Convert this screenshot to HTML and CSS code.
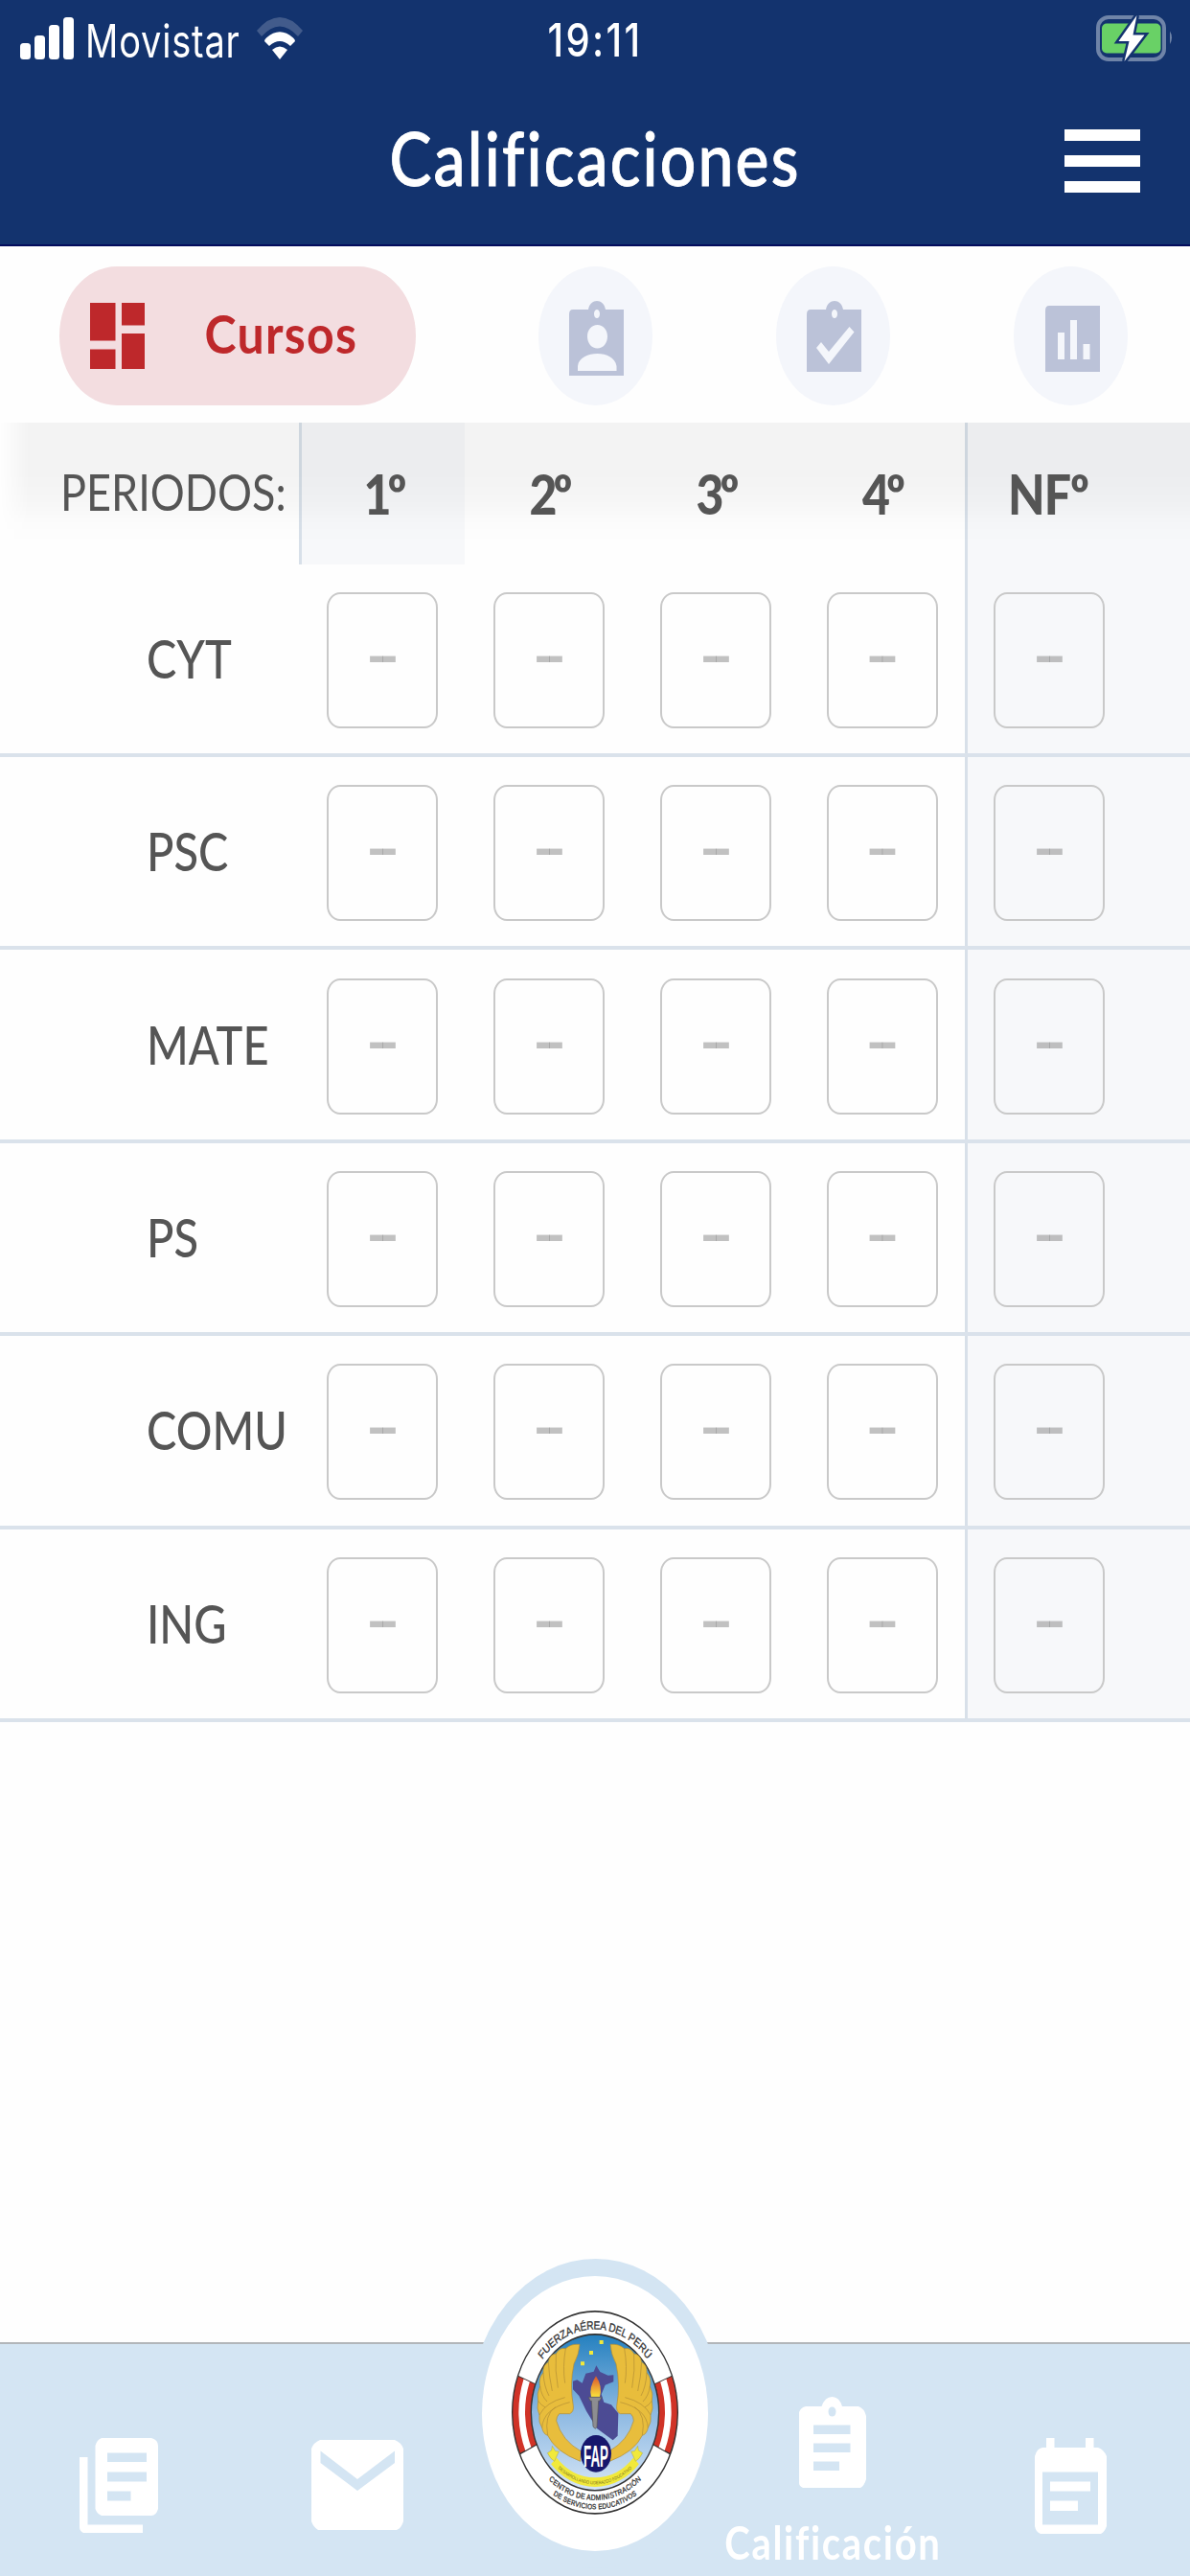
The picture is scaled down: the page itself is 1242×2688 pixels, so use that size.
FILE: index.html
```html
<!DOCTYPE html>
<html lang="es">
<head>
    <meta charset="UTF-8">
    <title>Calificaciones</title>
    <link rel="stylesheet" href="styles.css">
</head>
<body>
    <header class="header">
        <div class="status">
            <div class="status-left">
                <svg class="signal" width="56" height="44" viewBox="0 0 56 44">
                    <rect x="0" y="27" width="11" height="17" rx="3.5"/>
                    <rect x="15" y="19" width="11" height="25" rx="3.5"/>
                    <rect x="30" y="8" width="11" height="36" rx="3.5"/>
                    <rect x="45" y="0" width="11" height="44" rx="3.5"/>
                </svg>
                <span class="carrier">Movistar</span>
                <svg class="wifi" width="50" height="45" viewBox="0 0 50 45">
                    <path class="wifi-off" d="M1 14Q25-14 49 14L44 20Q25-1 6 20Z"/>
                    <path d="M9 25Q9 23 11 21.500Q25 9 39 21.500Q41 23 41 25L36 30Q25 20 14 30Z"/>
                    <path d="M17 34Q25 27 33 34L25 44Z"/>
                </svg>
            </div>
            <span class="clock">19:11</span>
            <svg class="battery" width="80" height="50" viewBox="0 0 80 50">
                <rect class="battery-case" x="2" y="3" width="69" height="44" rx="11"/>
                <rect class="battery-fill" x="6" y="9.500" width="61.500" height="31" rx="5"/>
                <path class="battery-nub" d="M77 17.500Q81 24 77 31Z"/>
                <path class="battery-bolt" d="M42.500 1L23.500 28H34.500L29.500 49L50.500 21.500H38.500Z"/>
            </svg>
        </div>
        <div class="title-bar">
            <h1>Calificaciones</h1>
            <div class="menu"><i></i><i></i><i></i></div>
        </div>
    </header>

    <nav class="tabs">
        <div class="tab tab-wide">
            <div class="pill">
                <svg width="57" height="69" viewBox="0 0 57 69">
                    <path d="M0 0h26.500v39.500H0zM0 48.500h26.500V69H0zM33 0h24v23.500H33zM33 32h24v37H33z"/>
                </svg>
                <span>Cursos</span>
            </div>
        </div>
        <div class="tab">
            <div class="round">
                <svg width="57" height="78" viewBox="0 0 57 78">
                    <path fill-rule="evenodd" d="M4 9H20C21 3 25 0 29 0S37 3 38 9H57V78H0V14Q0 9 4 9ZM29 9C27.500 9 26 10.500 26 13.500S27.500 18 29 18S32 16.500 32 13.500S30.500 9 29 9ZM29.500 25C23.500 25 19 30 19 37S23.500 49.500 29.500 49.500S40 44 40 37S35.500 25 29.500 25ZM9 73H49.500V68C48 59 39 55 29.500 55S10 59 9 68Z"/>
                </svg>
            </div>
        </div>
        <div class="tab">
            <div class="round">
                <svg width="57" height="78" viewBox="0 0 57 78">
                    <path fill-rule="evenodd" d="M4 9H20C21 3 25 0 29 0S37 3 38 9H57V74H0V14Q0 9 4 9ZM29 9C27.500 9 26 10.500 26 13.500S27.500 18 29 18S32 16.500 32 13.500S30.500 9 29 9ZM10 49L15 43L23 53L44.500 27L49.500 32.500L23 66Z"/>
                </svg>
            </div>
        </div>
        <div class="tab">
            <div class="round">
                <svg width="57" height="78" viewBox="0 0 57 78">
                    <path fill-rule="evenodd" d="M4 5H57V74H0V10Q0 5 4 5ZM13 33V61H20V33ZM26 20V61H33V20ZM39.500 45V61H46.500V45Z"/>
                </svg>
            </div>
        </div>
    </nav>

    <main class="grades">
        <div class="row periods">
            <div class="periods-label"><span>PERIODOS:</span></div>
            <div class="period active"><span>1º</span></div>
            <div class="period"><span>2º</span></div>
            <div class="period"><span>3º</span></div>
            <div class="period"><span>4º</span></div>
            <div class="period final"><span>NFº</span></div>
        </div>
        <div class="row">
            <div class="course"><span>CYT</span></div>
            <div class="cell"><b>--</b></div>
            <div class="cell"><b>--</b></div>
            <div class="cell"><b>--</b></div>
            <div class="cell"><b>--</b></div>
            <div class="cell final"><b>--</b></div>
        </div>
        <div class="row">
            <div class="course"><span>PSC</span></div>
            <div class="cell"><b>--</b></div>
            <div class="cell"><b>--</b></div>
            <div class="cell"><b>--</b></div>
            <div class="cell"><b>--</b></div>
            <div class="cell final"><b>--</b></div>
        </div>
        <div class="row">
            <div class="course"><span>MATE</span></div>
            <div class="cell"><b>--</b></div>
            <div class="cell"><b>--</b></div>
            <div class="cell"><b>--</b></div>
            <div class="cell"><b>--</b></div>
            <div class="cell final"><b>--</b></div>
        </div>
        <div class="row">
            <div class="course"><span>PS</span></div>
            <div class="cell"><b>--</b></div>
            <div class="cell"><b>--</b></div>
            <div class="cell"><b>--</b></div>
            <div class="cell"><b>--</b></div>
            <div class="cell final"><b>--</b></div>
        </div>
        <div class="row">
            <div class="course"><span>COMU</span></div>
            <div class="cell"><b>--</b></div>
            <div class="cell"><b>--</b></div>
            <div class="cell"><b>--</b></div>
            <div class="cell"><b>--</b></div>
            <div class="cell final"><b>--</b></div>
        </div>
        <div class="row">
            <div class="course"><span>ING</span></div>
            <div class="cell"><b>--</b></div>
            <div class="cell"><b>--</b></div>
            <div class="cell"><b>--</b></div>
            <div class="cell"><b>--</b></div>
            <div class="cell final"><b>--</b></div>
        </div>
    </main>

    <nav class="bottom">
        <div class="item">
            <svg width="82" height="99" viewBox="0 0 82 99">
                <path fill-rule="evenodd" d="M23 0H75Q82 2 82 8V74Q80 81 75 81H23Q18 79 16.500 74V8Q18 2 23 0ZM29 15.500V25H70V15.500ZM29 35.500V45.500H70V35.500ZM29 55.500V65.500H53.500V55.500Z"/>
                <path d="M0 20H8.500V90.500H66V99H4Q0 97 0 93Z"/>
            </svg>
        </div>
        <div class="item item-mail">
            <svg width="96" height="94" viewBox="0 0 96 94">
                <path fill-rule="evenodd" d="M9 0H87Q94 3 96 9V85Q94 92 89 94H7Q2 91 0 85V9Q2 3 9 0ZM9.500 11.500V24L48 53L87 24V11.500L48 41Z"/>
            </svg>
        </div>
        <div class="item item-logo">
            <div class="logo">
                <svg width="236" height="287" viewBox="70 105 708 861">
                    <defs>
                        <linearGradient id="sky" x1="0" y1="0" x2="0" y2="1">
                            <stop offset="0" stop-color="#2480bf"/>
                            <stop offset=".5" stop-color="#8db9e2"/>
                            <stop offset="1" stop-color="#d5e5f6"/>
                        </linearGradient>
                        <linearGradient id="fire" x1="0" y1="0" x2="0" y2="1">
                            <stop offset="0" stop-color="#d9532c"/>
                            <stop offset="1" stop-color="#fbe43c"/>
                        </linearGradient>
                        <path id="arcTop" d="M-213 0A213 213 0 0 1 213 0"/>
                        <path id="arcRibbon" d="M-184 0A184 184 0 0 0 184 0"/>
                        <path id="arcCentro" d="M-225 0A225 225 0 0 0 225 0"/>
                        <path id="arcServicios" d="M-248 0A248 248 0 0 0 248 0"/>
                        <g id="wing">
                            <path fill="#e8bd3c" stroke="#b08c35" stroke-width="2" d="M376 319Q350 316 332 332Q312 328 302 348Q282 350 278 374Q260 384 262 408Q246 424 252 450Q240 474 246 496Q240 520 250 540Q246 562 258 580Q262 600 276 604Q300 655 378 685L381 654Q320 620 303 558Q303 545 312 536L345 536Q358 530 356 512Q344 445 358 380Q374 350 376 319Z"/>
                            <path fill="none" stroke="#b08c35" stroke-width="2" d="M332 332Q322 390 330 440M302 348Q298 400 308 455M278 374Q280 420 290 465M262 408Q264 450 280 480M252 450Q256 480 274 498M246 496Q256 510 268 516M250 540Q270 500 330 485M258 580Q262 520 345 500M276 604Q264 540 300 515"/>
                        </g>
                    </defs>
                    <g transform="translate(424 532) scale(1 1.222)">
                        <circle r="259" fill="#fff" stroke="#333" stroke-width="4"/>
                        <g fill="none">
                            <path stroke="#333" stroke-width="60" d="M-208 96A229 229 0 0 1 -213 -84M208 96A229 229 0 0 0 213 -84"/>
                            <path stroke="#d03327" stroke-width="56" d="M-209 93A229 229 0 0 1 -214 -82M209 93A229 229 0 0 0 214 -82"/>
                            <path stroke="#fff" stroke-width="20" d="M-209 93A229 229 0 0 1 -214 -82M209 93A229 229 0 0 0 214 -82"/>
                        </g>
                        <circle r="200" fill="url(#sky)" stroke="#333" stroke-width="4"/>
                        <path fill="none" stroke="#f1e93b" stroke-width="24" d="M-129 124A179 179 0 0 0 129 124"/>
                        <path fill="#f1e93b" stroke="#9b9430" d="M-149 104L-136 97L-134 86L-124 99L-113 100L-127 125L-138 118ZM149 104L136 97L134 86L124 99L113 100L127 125L138 118Z"/>
                        <g class="seal-text">
                            <text font-size="30" textLength="376"><textPath href="#arcTop" startOffset="50%">FUERZA AÉREA DEL PERÚ</textPath></text>
                            <text font-size="20" textLength="314"><textPath href="#arcCentro" startOffset="50%">CENTRO DE ADMINISTRACIÓN</textPath></text>
                            <text font-size="19" textLength="276"><textPath href="#arcServicios" startOffset="50%">DE SERVICIOS EDUCATIVOS</textPath></text>
                            <text class="motto" font-size="12" textLength="250"><textPath href="#arcRibbon" startOffset="50%">DESARROLLANDO LIDERAZGO EDUCATIVO</textPath></text>
                        </g>
                    </g>
                    <path fill="#4c4b94" d="M428 385L440 405L465 416L482 415L482 436L456 446L444 475L452 500L475 508L497 535L495 605L480 619L430 582L397 528L374 480L355 460L355 434L368 430L384 440L395 410L420 404Z"/>
                    <use href="#wing"/>
                    <use href="#wing" transform="translate(848 0) scale(-1 1)"/>
                    <path fill="url(#fire)" d="M427 418Q448 450 439 484H412Q404 455 427 418Z"/>
                    <path fill="#8d8d91" stroke="#555" stroke-width="2" d="M404 484H445L439 496H435L430 578L424 583L418 576L413 496H409Z"/>
                    <path fill="#f1e93b" d="M379 373h12v12h-12zM406 339h12v12h-12zM438 306h12v12h-12z"/>
                    <ellipse cx="427" cy="661" rx="48" ry="58" fill="#17176d"/>
                    <text class="fap" transform="translate(427 702) scale(1 2)" font-size="48" textLength="78" lengthAdjust="spacingAndGlyphs">FAP</text>
                </svg>
            </div>
        </div>
        <div class="item item-active">
            <svg width="70" height="95" viewBox="0 0 70 95">
                <path fill-rule="evenodd" d="M7 10H23.500Q27 0 34.500 0T45 10H62Q68 12 70 20V86Q68 93 64 95H4Q0 93 0 90V16Q2 11 7 10ZM34.500 10.500C32 10.500 30.500 12.500 30.500 15.500S32 20.500 34.500 20.500S38.500 18.500 38.500 15.500S37 10.500 34.500 10.500ZM15 29.500V39H53.500V29.500ZM15 48.500V58H53.500V48.500ZM15 67.500V77H42V67.500Z"/>
            </svg>
            <span>Calificación</span>
        </div>
        <div class="item">
            <svg width="75" height="100" viewBox="0 0 75 100">
                <path fill-rule="evenodd" d="M12 0H20.500V10H53V0H61.500V10H66Q72 12 75 19V92Q73 98 69 100H6Q1 98 0 92V19Q2 11 8 10H12ZM8 35.500V90.500H66V35.500ZM16 45.500H58V55.500H16ZM16 65.500H45V76H16Z"/>
            </svg>
        </div>
    </nav>
</body>
</html>
```
FILE: styles.css
```css
body {
    margin: 0;
    width: 1242px;
    height: 2688px;
    overflow: hidden;
    display: flex;
    flex-direction: column;
    background-color: #fefefe;
    color: #555;
    font-family: Lato, sans-serif;
    font-variant-ligatures: none;
}
span, h1, b {
    display: inline-block;
    white-space: nowrap;
    line-height: 1;
}
svg {
    display: block;
    fill: currentColor;
    flex: none;
}

/* header */
.header {
    height: 257px;
    box-sizing: border-box;
    background-color: #13336e;
    border-bottom: 2px solid #030c5c;
    color: #fff;
}
.status {
    display: grid;
    grid-template-columns: 1fr auto 1fr;
    align-items: center;
    height: 80px;
    font-family: Inter, sans-serif;
}
.status-left {
    display: flex;
    align-items: center;
    padding-left: 21px;
}
.carrier {
    font-size: 38px;
    letter-spacing: 0.8px;
    margin: 4px 16px 0 12px;
    transform: scaleY(1.26);
}
.wifi-off {
    opacity: 0.2;
}
.clock {
    font-size: 40px;
    font-weight: 500;
    letter-spacing: 2.4px;
    margin-top: 4px;
    transform: scaleY(1.2);
}
.battery {
    justify-self: end;
    margin-right: 18px;
}
.battery-case {
    fill: none;
    stroke: #6f84a8;
    stroke-width: 4;
}
.battery-fill {
    fill: #69d166;
}
.battery-nub {
    fill: #6f84a8;
}
.battery-bolt {
    stroke: #13336e;
    stroke-width: 5;
    paint-order: stroke;
}
.title-bar {
    display: grid;
    grid-template-columns: 1fr auto 1fr;
    align-items: center;
    height: 175px;
}
h1 {
    grid-column: 2;
    margin: 0 0 6px;
    font-size: 66px;
    font-weight: 500;
    letter-spacing: 2.2px;
    -webkit-text-stroke: 0.8px #fff;
    transform: scaleY(1.18);
}
.menu {
    justify-self: end;
    display: flex;
    flex-direction: column;
    gap: 15px;
    margin-right: 52px;
}
.menu i {
    width: 79px;
    height: 12px;
    background-color: #fff;
}

/* tabs */
.tabs {
    display: flex;
    align-items: center;
    height: 184px;
    box-sizing: border-box;
    padding-top: 3px;
}
.tab {
    flex: 1;
    display: flex;
    justify-content: center;
}
.tab-wide {
    flex: 2;
}
.pill {
    display: flex;
    align-items: center;
    width: 372px;
    height: 145px;
    box-sizing: border-box;
    padding-left: 32px;
    border-radius: 60px / 72.5px;
    background-color: #f3dde0;
    color: #be282b;
}
.pill span {
    margin: 0 0 5px 62px;
    font-size: 50px;
    font-weight: 700;
    letter-spacing: 1.3px;
    transform: scaleY(1.1);
}
.round {
    display: flex;
    align-items: center;
    justify-content: center;
    width: 119px;
    height: 145px;
    box-sizing: border-box;
    padding: 4px 0 0 3px;
    border-radius: 50%;
    background-color: #f4f6fb;
    color: #bbc2d8;
}

/* grades table */
.grades {
    flex: 1;
}
.row {
    display: grid;
    grid-template-columns: 312px 174px 174px 174px 173px 1fr;
    height: 201.4px;
    box-sizing: border-box;
    border-bottom: 4px solid #dae2eb;
}
.final {
    border-left: 3px solid #d8e0e9;
    background-color: #f7f8fa;
}
.course {
    display: flex;
    align-items: center;
    padding-left: 153px;
    overflow: hidden;
}
.course span {
    font-size: 47px;
    font-weight: 500;
    transform: scaleY(1.19);
}
.cell {
    display: flex;
    align-items: center;
    justify-content: center;
    padding-top: 3px;
}
.cell.final {
    justify-content: flex-start;
    padding-left: 27px;
}
.cell b {
    width: 116px;
    height: 142px;
    box-sizing: border-box;
    padding-right: 4px;
    border: 2px solid #c9c9c9;
    border-radius: 14px / 16px;
    color: rgba(120, 120, 120, 0.45);
    font: bold 54px "Liberation Sans", sans-serif;
    line-height: 126px;
    letter-spacing: -5px;
    text-align: center;
}
.periods {
    position: relative;
    height: 147.6px;
    border-bottom: none;
}
/* shadow falling from the tab bar */
.periods::before {
    content: "";
    position: absolute;
    inset: 0;
    background: linear-gradient(rgba(0, 0, 0, 0.044) 35%, rgba(0, 0, 0, 0.03) 55%, rgba(0, 0, 0, 0.008) 72%, transparent 85%);
    mask-image: linear-gradient(90deg, transparent, #000 30px);
}
.periods-label {
    display: flex;
    align-items: center;
    padding-left: 63px;
}
.periods-label span {
    font-size: 45px;
    transform: scaleY(1.14);
}
.period {
    display: flex;
    align-items: center;
    justify-content: center;
    font-size: 50px;
    font-weight: 900;
    letter-spacing: -4px;
}
.period span {
    transform: scaleY(1.14);
}
.active {
    border-left: 3px solid #d8e0e9;
    margin-right: 1px;
    background-color: #f7f8fa;
}
.period.final {
    justify-content: flex-start;
    padding-left: 42px;
    letter-spacing: -1px;
}

/* bottom navigation */
.bottom {
    display: flex;
    height: 244px;
    box-sizing: border-box;
    border-top: 2px solid #b2b6ba;
    background-color: #d4e5f3;
    color: #fff;
}
.item {
    flex: 1;
    min-width: 0;
    display: flex;
    flex-direction: column;
    align-items: center;
    padding-top: 98px;
}
.item-mail {
    padding-top: 100px;
}
.item-logo {
    padding-top: 0;
}
/* the emblem rises above the bar */
.logo {
    width: 236px;
    height: 287px;
    margin-top: -89px;
    padding: 18px 13.5px;
    border-radius: 50%;
    background-color: #d4e5f3;
}
.logo svg {
    border-radius: 50%;
    background-color: #fff;
}
.seal-text {
    fill: #333;
    font-family: "Liberation Sans", sans-serif;
    text-anchor: middle;
    stroke: #333;
    stroke-width: 0.8;
}
.motto {
    fill: #77711f;
    stroke: none;
}
.fap {
    fill: #fff;
    font-family: "Liberation Sans", sans-serif;
    font-weight: 700;
    text-anchor: middle;
}
.item-active {
    padding-top: 55px;
}
.item-active span {
    margin-top: 37px;
    font-size: 40px;
    font-weight: 700;
    letter-spacing: 1.7px;
    transform: scaleY(1.2);
}
```
